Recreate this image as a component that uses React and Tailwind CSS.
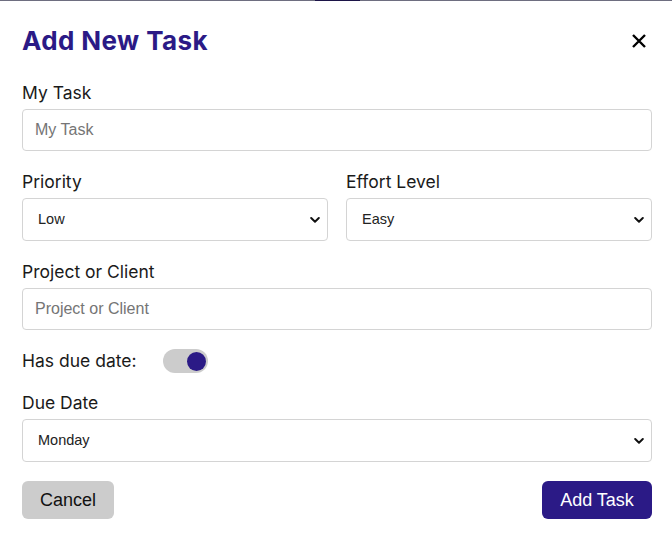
import React from "react";

const Chevron = () => (
  <svg width="10" height="7" viewBox="0 0 10 7" className="pointer-events-none absolute right-[8px] top-1/2 -translate-y-1/2">
    <path d="M1.2 1.5 L5 5.2 L8.8 1.5" fill="none" stroke="#111" strokeWidth="2" strokeLinecap="round" strokeLinejoin="round" />
  </svg>
);

const arial = { fontFamily: '"Liberation Sans", Arial, sans-serif' };

function Select({ value }) {
  return (
    <div className="relative">
      <select
        defaultValue={value}
        className="appearance-none w-full h-[43px] rounded-[4px] border border-[#d4d4d4] bg-white pl-[15px] pr-8 text-[14.5px] text-[#222] outline-none"
        style={arial}
      >
        <option>{value}</option>
      </select>
      <Chevron />
    </div>
  );
}

function Label({ children }) {
  return <div className="text-[17.5px] leading-[24px] text-[#1a1a1a] mb-[4px]">{children}</div>;
}

function TextInput({ placeholder }) {
  return (
    <input
      placeholder={placeholder}
      className="w-full h-[42px] rounded-[4px] border border-[#d4d4d4] px-[12px] text-[16px] placeholder-[#757575] outline-none"
      style={arial}
    />
  );
}

export default function App() {
  return (
    <div className="w-[672px] h-[540px] bg-white overflow-hidden" style={{ fontFamily: 'Inter, "Noto Sans", sans-serif' }}>
      <div className="flex h-px w-full">
        <div className="w-[315px] bg-[#6e6e80]" />
        <div className="w-[45px] bg-[#1c1448]" />
        <div className="flex-1 bg-[#6e6e80]" />
      </div>
      <div className="pl-[22px] pr-[20px] pt-[24px]">
        <div className="flex items-center justify-between h-[32px]">
          <h1 className="text-[26px] leading-[32px] font-bold text-[#2b1a86] tracking-[0.4px]">Add New Task</h1>
          <svg width="16" height="16" viewBox="0 0 16 16" className="mr-[5px]">
            <path d="M2 2 L14 14 M14 2 L2 14" stroke="#000" strokeWidth="2.4" />
          </svg>
        </div>

        <div className="mt-[24px]">
          <Label>My Task</Label>
          <TextInput placeholder="My Task" />
        </div>

        <div className="mt-[19px] grid grid-cols-2 gap-[18px]">
          <div>
            <Label>Priority</Label>
            <Select value="Low" />
          </div>
          <div>
            <Label>Effort Level</Label>
            <Select value="Easy" />
          </div>
        </div>

        <div className="mt-[19px]">
          <Label>Project or Client</Label>
          <TextInput placeholder="Project or Client" />
        </div>

        <div className="mt-[19px] flex items-center h-[24px]">
          <span className="text-[17.5px] text-[#1a1a1a]">Has due date:</span>
          <div className="ml-[26px] w-[45px] h-[24px] rounded-full bg-[#cccccc] flex items-center justify-end pr-[2px]">
            <div className="w-[19px] h-[19px] rounded-full bg-[#2b1a86]" />
          </div>
        </div>

        <div className="mt-[18px]">
          <Label>Due Date</Label>
          <Select value="Monday" />
        </div>

        <div className="mt-[19px] flex justify-between">
          <button className="w-[92px] h-[38px] rounded-[6px] bg-[#cccccc] text-[18px] text-[#111]" style={arial}>
            Cancel
          </button>
          <button className="w-[110px] h-[38px] rounded-[6px] bg-[#2b1a86] text-[18px] text-white" style={arial}>
            Add Task
          </button>
        </div>
      </div>
    </div>
  );
}
